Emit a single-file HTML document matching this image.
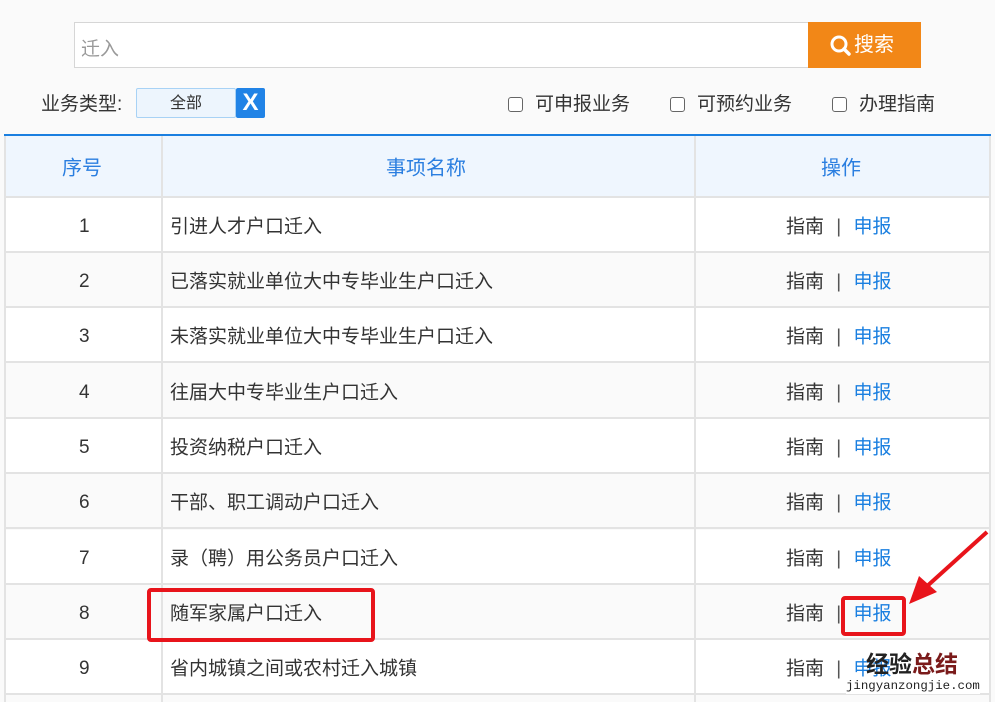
<!DOCTYPE html><html><head><meta charset="utf-8"><style>
body{margin:0;width:995px;height:702px;background:#fafafa;font-family:"Liberation Sans","Noto Sans CJK SC",sans-serif;position:relative;overflow:hidden;color:#333}
.a{position:absolute}
.row{position:absolute;left:4px;width:987px;height:55px;border-bottom:2px solid #e3e3e3;box-sizing:border-box;font-size:19px}
.row span{position:absolute;top:50%;transform:translateY(-50%);white-space:nowrap}
.row span.num{margin-top:2px}
.vl{position:absolute;top:136px;width:2px;height:566px;background:#e3e3e3}
.b{color:#1a7fe0}
.cb{display:inline-block;width:13px;height:13px;border:1px solid #666;border-radius:3px;background:#fff;vertical-align:-2px;margin-right:12px}
</style></head><body>
<div class="a" style="left:74px;top:22px;width:734px;height:44px;border:1px solid #d6d6d6;background:#fff"></div>
<div class="a" style="left:81px;top:34px;font-size:19px;color:#999">迁入</div>
<div class="a" style="left:808px;top:22px;width:113px;height:46px;background:#f28717;color:#fff;font-size:20px;line-height:46px">
<svg style="position:absolute;left:22px;top:13px" width="22" height="22" viewBox="0 0 22 22"><circle cx="9" cy="9" r="7" fill="none" stroke="#fff" stroke-width="3"/><path d="M14 14l5 5" stroke="#fff" stroke-width="3.5" stroke-linecap="round"/></svg><span style="position:absolute;left:46px">搜索</span></div>
<div class="a" style="left:41px;top:89px;font-size:19px">业务类型:</div>
<div class="a" style="left:136px;top:88px;width:98px;height:28px;border:1px solid #a8d2f5;background:#edf5fd;border-radius:2px;text-align:center;line-height:30px;font-size:16px">全部</div>
<div class="a" style="left:236px;top:88px;width:29px;height:30px;background:#2183e6;border-radius:2px;color:#fff;text-align:center;line-height:30px;font-size:24px;font-weight:bold">X</div>
<div class="a" style="left:508px;top:89px;font-size:19px"><span class="cb"></span>可申报业务</div>
<div class="a" style="left:670px;top:89px;font-size:19px"><span class="cb"></span>可预约业务</div>
<div class="a" style="left:832px;top:89px;font-size:19px"><span class="cb"></span>办理指南</div>
<div class="a" style="left:4px;top:134px;width:987px;height:2px;background:#1a7fe0"></div>
<div class="row" style="top:136px;height:62px;background:#eff6fe;color:#2a7ee0;font-size:20px"><span style="left:58px">序号</span><span style="left:382px">事项名称</span><span style="left:817px">操作</span></div>

<div class="row" style="top:198px;background:#fff"><span class="num" style="left:75px">1</span><span style="left:166px">引进人才户口迁入</span><span style="left:782px">指南 <span style="position:static;transform:none;margin:0 7px;color:#555">|</span> <b class="b" style="font-weight:normal">申报</b></span></div>
<div class="row" style="top:253px;background:#fafafa"><span class="num" style="left:75px">2</span><span style="left:166px">已落实就业单位大中专毕业生户口迁入</span><span style="left:782px">指南 <span style="position:static;transform:none;margin:0 7px;color:#555">|</span> <b class="b" style="font-weight:normal">申报</b></span></div>
<div class="row" style="top:308px;background:#fff"><span class="num" style="left:75px">3</span><span style="left:166px">未落实就业单位大中专毕业生户口迁入</span><span style="left:782px">指南 <span style="position:static;transform:none;margin:0 7px;color:#555">|</span> <b class="b" style="font-weight:normal">申报</b></span></div>
<div class="row" style="top:364px;background:#fafafa"><span class="num" style="left:75px">4</span><span style="left:166px">往届大中专毕业生户口迁入</span><span style="left:782px">指南 <span style="position:static;transform:none;margin:0 7px;color:#555">|</span> <b class="b" style="font-weight:normal">申报</b></span></div>
<div class="row" style="top:419px;background:#fff"><span class="num" style="left:75px">5</span><span style="left:166px">投资纳税户口迁入</span><span style="left:782px">指南 <span style="position:static;transform:none;margin:0 7px;color:#555">|</span> <b class="b" style="font-weight:normal">申报</b></span></div>
<div class="row" style="top:474px;background:#fafafa"><span class="num" style="left:75px">6</span><span style="left:166px">干部、职工调动户口迁入</span><span style="left:782px">指南 <span style="position:static;transform:none;margin:0 7px;color:#555">|</span> <b class="b" style="font-weight:normal">申报</b></span></div>
<div class="row" style="top:530px;background:#fff"><span class="num" style="left:75px">7</span><span style="left:166px">录（聘）用公务员户口迁入</span><span style="left:782px">指南 <span style="position:static;transform:none;margin:0 7px;color:#555">|</span> <b class="b" style="font-weight:normal">申报</b></span></div>
<div class="row" style="top:585px;background:#fafafa"><span class="num" style="left:75px">8</span><span style="left:166px">随军家属户口迁入</span><span style="left:782px">指南 <span style="position:static;transform:none;margin:0 7px;color:#555">|</span> <b class="b" style="font-weight:normal">申报</b></span></div>
<div class="row" style="top:640px;background:#fff"><span class="num" style="left:75px">9</span><span style="left:166px">省内城镇之间或农村迁入城镇</span><span style="left:782px">指南 <span style="position:static;transform:none;margin:0 7px;color:#555">|</span> <b class="b" style="font-weight:normal">申报</b></span></div>
<div class="row" style="top:696px;height:6px;background:#fafafa;border:0"></div>

<div class="vl" style="left:4px"></div>
<div class="vl" style="left:161px"></div>
<div class="vl" style="left:694px"></div>
<div class="vl" style="left:989px"></div>

<div class="a" style="left:147px;top:588px;width:220px;height:46px;border:4px solid #e8141b;border-radius:4px"></div>
<div class="a" style="left:841px;top:596px;width:57px;height:32px;border:4px solid #e8141b;border-radius:4px"></div>
<svg class="a" style="left:905px;top:528px" width="85" height="80" viewBox="0 0 85 80"><path d="M82 4 L20 60" stroke="#e8141b" stroke-width="4"/><path d="M4 76 L14 48 L32 64 Z" fill="#e8141b"/></svg>
<div class="a" style="left:866px;top:650px;font-size:23px;font-weight:bold;line-height:28px"><span style="color:#222">经验</span><span style="color:#7a1a1a">总结</span></div>
<div class="a" style="left:846px;top:678px;font-size:12.4px;line-height:16px;font-family:'Liberation Mono',monospace;color:#222;background:#fff">jingyanzongjie.com</div>
</body></html>
